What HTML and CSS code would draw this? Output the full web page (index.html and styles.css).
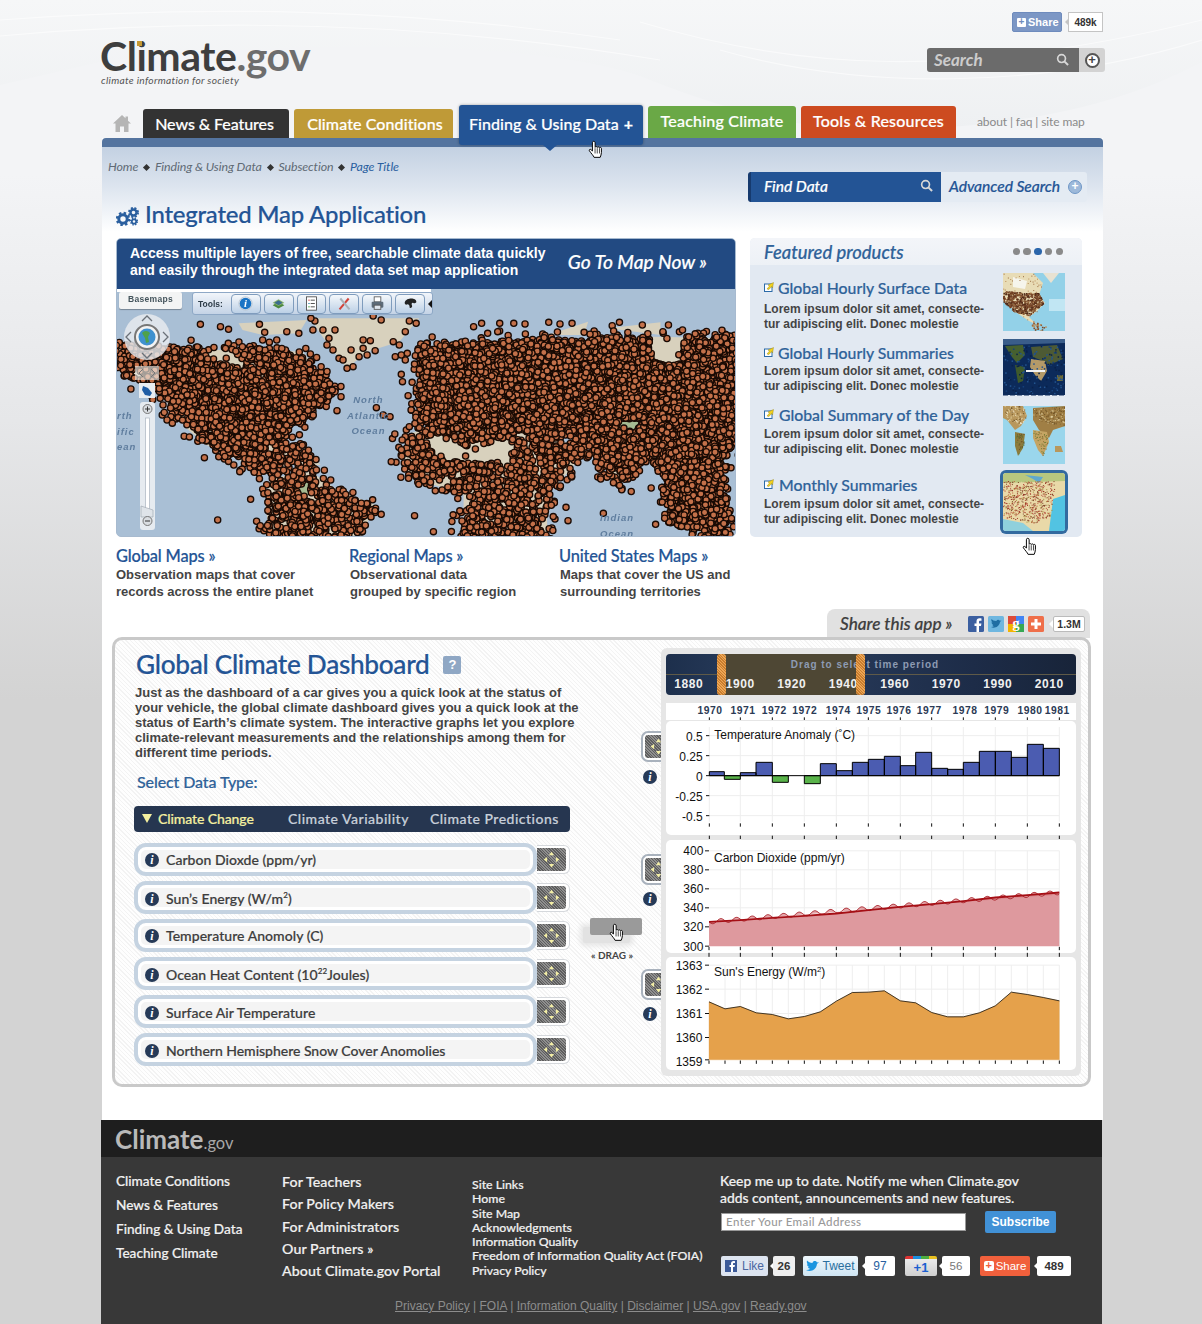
FILE: index.html
```html
<!DOCTYPE html>
<html lang="en">
<head>
<meta charset="utf-8">
<title>Integrated Map Application - Climate.gov</title>
<link rel="stylesheet" href="styles.css">
</head>
<body>
<svg class="defs" width="0" height="0" aria-hidden="true">
  <symbol id="arrows" viewBox="0 0 24 24">
    <path fill="#f3eea6" d="M12 3l3 4H9zM12 21l-3-4h6zM3 12l4-3v6zM21 12l-4 3V9z"/>
  </symbol>
  <symbol id="hand" viewBox="0 0 17 21">
    <path fill="#fff" stroke="#000" stroke-width="1.1" d="M6.5 1.2c1 0 1.6.7 1.6 1.6V8c.4-.9 2.1-.9 2.5.1.4-.8 2.1-.7 2.4.3.6-.6 2.2-.3 2.2.9v4.6c0 2.3-.8 3.6-1.4 5.5H6.9C6.2 17.500 3.400 14.700 1.600 12c-.7-1.100.6-2.300 1.700-1.400L5 12.200V2.800c0-.9.500-1.600 1.500-1.600z"/>
    <path stroke="#000" stroke-width=".8" d="M8 9v6M10.500 9v6M13 9v6"/>
  </symbol>
  <symbol id="mag" viewBox="0 0 14 14">
    <circle cx="6" cy="6" r="4.200" fill="none" stroke="currentColor" stroke-width="1.800"/>
    <path stroke="currentColor" stroke-width="2.200" d="M9 9l4 4"/>
  </symbol>
  <symbol id="ext" viewBox="0 0 10 10">
    <rect x=".5" y="2" width="7.500" height="7.500" fill="#fff" stroke="#2b6aa8"/>
    <path fill="#f2d21f" stroke="#8a7a10" stroke-width=".4" d="M3 7l2.500-3L4 3l5.500-2.500L8.500 6l-1-1.500L5 7.500z"/>
  </symbol>
</svg>

<svg class="waves" viewBox="0 0 1202 175" width="1202" height="175" aria-hidden="true">
  <defs>
    <linearGradient id="wv" x1="0" y1="0" x2="0" y2="1"><stop offset="0" stop-color="#f6f7f8"/><stop offset="1" stop-color="#eef0f2"/></linearGradient>
  </defs>
  <path fill="url(#wv)" d="M0 0H1202V62C1130 100 1040 125 900 130C800 133 720 108 640 76C540 42 300 38 100 62L0 85Z"/>
  <path fill="#f3f4f6" d="M0 100C40 88 70 80 102 76V175H0Z"/>
  <path fill="#f3f4f6" d="M1103 140C1140 130 1175 120 1202 108V175H1103Z"/>
  <path fill="none" stroke="#fff" stroke-width="1.200" opacity=".55" d="M0 20C200 5 400 8 620 40M0 36C200 18 420 20 660 60M640 22C800 70 960 80 1202 20M720 50C860 90 1040 90 1202 40"/>
</svg>

<div class="page">
  <header class="head">
    <div class="share-top">
      <a class="share-btn"><span class="plus-box">+</span>Share</a>
      <span class="share-count">489k</span>
    </div>
    <div class="brand">
      <div class="logo">
        <div class="logo-word">Climate<span class="logo-gov">.gov</span><span class="logo-dot"></span></div>
        <div class="logo-tag">climate information for society</div>
      </div>
      <div class="search">
        <div class="search-field"><span>Search</span><svg class="mag-i"><use href="#mag"/></svg></div>
        <div class="search-plus"><span>+</span></div>
      </div>
    </div>
    <nav class="nav">
      <svg class="home" viewBox="0 0 18 17"><path fill="#b5b5b5" d="M9 0L0 8.500h2.500V17h4.500v-5.500h4V17h4.500V8.500H18L15 5.700V1.500h-2.500v1.800z"/></svg>
      <a class="tab tab-news">News &amp; Features</a>
      <a class="tab tab-cond">Climate Conditions</a>
      <a class="tab tab-find">Finding &amp; Using Data <b>+</b></a>
      <a class="tab tab-teach">Teaching Climate</a>
      <a class="tab tab-tools">Tools &amp; Resources</a>
      <span class="nav-links">about | faq | site map</span>
    </nav>
  </header>

  <main class="main">
    <div class="bluebar"></div>
    <div class="main-top">
      <div class="toprow">
        <div class="toprow-left">
          <div class="crumbs">Home <i class="dm"></i> Finding &amp; Using Data <i class="dm"></i> Subsection <i class="dm"></i> <span class="crumb-cur">Page Title</span></div>
          <h1 class="page-title">
            <svg class="gears" viewBox="0 0 24 20"><g fill="none" stroke="#2a5f9f"><circle cx="7" cy="13" r="4.200" stroke-width="3"/><circle cx="7" cy="13" r="6" stroke-width="2.400" stroke-dasharray="2.400 2.300"/><circle cx="17.500" cy="6.500" r="3" stroke-width="2.400"/><circle cx="17.500" cy="6.500" r="4.500" stroke-width="2" stroke-dasharray="2 1.600"/><circle cx="18" cy="15.500" r="2.200" stroke-width="1.800"/><circle cx="18" cy="15.500" r="3.400" stroke-width="1.400" stroke-dasharray="1.400 1.300"/></g></svg>
            Integrated Map Application
          </h1>
        </div>
        <div class="findbar">
          <div class="find-field"><span>Find Data</span><svg class="mag-i"><use href="#mag"/></svg></div>
          <div class="adv"><span>Advanced Search</span><span class="adv-plus">+</span></div>
        </div>
      </div>

      <div class="mapgrid">
        <section class="mappanel">
          <div class="map-head">
            <p class="map-intro">Access multiple layers of free, searchable climate data quickly and easily through the integrated data set map application</p>
            <a class="map-go">Go To Map Now »</a>
          </div>
          <div class="map">
            <canvas id="mapcanvas" class="mapcanvas" width="618" height="247"></canvas>
            <div class="map-strip"></div>
            <div class="basemaps">Basemaps</div>
            <div class="toolbar">
              <span class="tools-label">Tools:</span>
              <span class="tool"><svg viewBox="0 0 18 18"><circle cx="9" cy="9" r="7" fill="#1b74c5"/><circle cx="9" cy="9" r="8" fill="none" stroke="#b9c4cf"/><text x="9" y="13" class="tool-i">i</text></svg></span>
              <span class="tool"><svg viewBox="0 0 18 18"><path fill="#4d8a3f" d="M2 11l7-4 7 4-7 4z"/><path fill="#8db56a" d="M2 8l7-4 7 4-7 4z"/><path fill="#3d6d8f" d="M4 8l5-3 5 3-5 3z"/></svg></span>
              <span class="tool"><svg viewBox="0 0 18 18"><rect x="3" y="1" width="12" height="16" fill="#fff" stroke="#444"/><path stroke="#c33" d="M5 5h2"/><path stroke="#38a" d="M5 9h2"/><path stroke="#393" d="M5 13h2"/><path stroke="#333" d="M8 5h5M8 9h5M8 13h5"/></svg></span>
              <span class="tool"><svg viewBox="0 0 18 18"><path stroke="#d2433a" stroke-width="2.400" d="M3 16L14 3"/><path stroke="#aab1b8" stroke-width="2.400" d="M4 3l11 13"/></svg></span>
              <span class="tool"><svg viewBox="0 0 18 18"><rect x="5" y="1" width="8" height="6" fill="#fff" stroke="#555"/><rect x="2" y="7" width="14" height="7" rx="1" fill="#5d6b78"/><rect x="5" y="11" width="8" height="5" fill="#dfe6ee" stroke="#555"/></svg></span>
              <span class="tool"><svg viewBox="0 0 18 18"><path fill="#222" d="M2 8c1-4 5-5 8-5s6 1 6 4c0 2-3 2-4 1-2 0-2 2-1 4 0 2-2 3-3 2 0-3-1-4-3-4-1 1-3 0-3-2z"/></svg></span>
              <span class="tool-end"></span>
            </div>
            <svg class="map-ctrl" viewBox="0 0 618 246" aria-hidden="true">
              <circle cx="30" cy="47" r="23" fill="#e9ecef" opacity=".82"/>
              <g fill="none" stroke="#6b7178" stroke-width="1.300"><path d="M25 31l5-5 5 5M25 63l5 5 5-5M14 42l-5 5 5 5M46 42l5 5-5 5"/></g>
              <circle cx="30" cy="47" r="12" fill="#f3f3f3" stroke="#777" stroke-width="2"/>
              <circle cx="30" cy="47" r="8.500" fill="#3f91cf"/><path fill="#4fa14b" d="M25 43c3-3 6-2 8 0l-2 4 1 5-3 1-1-5z"/>
              <rect x="18" y="76" width="24" height="14" fill="#f0ece6" opacity=".65"/>
              <path fill="none" stroke="#777" d="M26 79l-4 4 4 4M34 79l4 4-4 4"/>
              <rect x="22" y="93" width="16" height="15" fill="#e9edf1"/>
              <path fill="#1f5da5" d="M26 96l5 2 4 5-2 3-5-1-3-5z"/>
              <rect x="23" y="112" width="15" height="128" rx="3" fill="#e6ebf0"/>
              <circle cx="30.500" cy="119" r="4.500" fill="#d9dde1" stroke="#777"/><path stroke="#333" d="M28 119h5M30.500 116.500v5"/>
              <rect x="28.500" y="128" width="4" height="95" fill="#fff" stroke="#a9b4bf" stroke-width=".7"/>
              <path fill="#dfe4e9" stroke="#99a3ad" stroke-width=".6" d="M24 216l12 4v7H24z"/>
              <circle cx="30.500" cy="231" r="4.500" fill="#d9dde1" stroke="#777"/><path stroke="#333" d="M28 231h5"/>
            </svg>
            <div class="ocean o1">North<br>Atlantic<br>Ocean</div>
            <div class="ocean o2">rth<br>ific<br>ean</div>
            <div class="ocean o3">Indian<br>Ocean</div>
          </div>
        </section>

        <aside class="featured">
          <div class="feat-head">
            <h2 class="feat-title">Featured products</h2>
            <div class="feat-dots"><i></i><i></i><i class="on"></i><i></i><i></i></div>
          </div>
          <div class="feat-body">
            <article class="feat-item fi1">
              <div class="feat-text">
                <h3><svg class="ext"><use href="#ext"/></svg>Global Hourly Surface Data</h3>
                <p>Lorem ipsum dolor sit amet, consecte-<br>tur adipiscing elit. Donec molestie</p>
              </div>
              <canvas class="thumb" id="t1" width="62" height="58"></canvas>
            </article>
            <article class="feat-item fi2">
              <div class="feat-text">
                <h3><svg class="ext"><use href="#ext"/></svg>Global Hourly Summaries</h3>
                <p>Lorem ipsum dolor sit amet, consecte-<br>tur adipiscing elit. Donec molestie</p>
              </div>
              <canvas class="thumb" id="t2" width="62" height="58"></canvas>
            </article>
            <article class="feat-item fi3">
              <div class="feat-text">
                <h3><svg class="ext"><use href="#ext"/></svg>Global Summary of the Day</h3>
                <p>Lorem ipsum dolor sit amet, consecte-<br>tur adipiscing elit. Donec molestie</p>
              </div>
              <canvas class="thumb" id="t3" width="62" height="58"></canvas>
            </article>
            <article class="feat-item fi4">
              <div class="feat-text">
                <h3><svg class="ext"><use href="#ext"/></svg>Monthly Summaries</h3>
                <p>Lorem ipsum dolor sit amet, consecte-<br>tur adipiscing elit. Donec molestie</p>
              </div>
              <canvas class="thumb thumb-on" id="t4" width="62" height="58"></canvas>
            </article>
          </div>
        </aside>
      </div>

      <div class="maplinks">
        <div><h3>Global Maps »</h3><p>Observation maps that cover<br>records across the entire planet</p></div>
        <div><h3>Regional Maps »</h3><p>Observational data<br>grouped by specific region</p></div>
        <div><h3>United States Maps »</h3><p>Maps that cover the US and<br>surrounding territories</p></div>
      </div>
    </div>

    <div class="share-app">
      <span class="share-label">Share this app »</span>
      <svg class="soc" viewBox="0 0 16 16"><rect width="16" height="16" rx="1.500" fill="#3b5fa0"/><path fill="#fff" d="M11 16v-6h2l.4-2.500H11V6c0-.8.3-1.200 1.200-1.200h1.300V2.500C13 2.400 12.300 2.300 11.500 2.300 9.700 2.300 8.500 3.400 8.500 5.500v2H6.500V10h2v6z"/></svg>
      <svg class="soc" viewBox="0 0 16 16"><rect width="16" height="16" rx="1.500" fill="#6fb7e0"/><path fill="#1f6ea3" d="M3 11c3 1.500 8 .5 9-5l1.500-1.500-1.700.3C11 3.500 9 3.500 8.300 5 6 5 4.500 4 3.500 3c-.5 1.500 0 2.500 1 3.500L3.500 6.300c0 1.200.7 2 1.800 2.400l-1 0c.3.800 1 1.300 1.800 1.400C5 10.700 4 11 3 11z"/></svg>
      <svg class="soc" viewBox="0 0 16 16"><rect width="8" height="8" fill="#dd4b39"/><rect x="8" width="8" height="8" fill="#4285f4"/><rect y="8" width="8" height="8" fill="#f4b400"/><rect x="8" y="8" width="8" height="8" fill="#37a853"/><text x="8" y="12" class="soc-g">g</text></svg>
      <svg class="soc" viewBox="0 0 16 16"><rect width="16" height="16" rx="1.500" fill="#ef6f4a"/><path stroke="#fff" stroke-width="3" d="M8 3v10M3 8h10"/></svg>
      <span class="soc-count">1.3M</span>
    </div>

    <section class="dash">
      <div class="dash-left">
        <h2 class="dash-title">Global Climate Dashboard <span class="help">?</span></h2>
        <p class="dash-intro">Just as the dashboard of a car gives you a quick look at the status of your vehicle, the global climate dashboard gives you a quick look at the status of Earth’s climate system. The interactive graphs let you explore climate-relevant measurements and the relationships among them for different time periods.</p>
        <h3 class="select-type">Select Data Type:</h3>
        <div class="type-tabs">
          <span class="type-tab is-on"><i class="tri"></i>Climate Change</span>
          <span class="type-tab">Climate Variability</span>
          <span class="type-tab">Climate Predictions</span>
        </div>
        <ul class="rows">
          <li class="row"><div class="pill"><span class="info">i</span><span>Carbon Dioxde (ppm/yr)</span></div><div class="rowgrab"><span class="hatch"><svg><use href="#arrows"/></svg></span></div></li>
          <li class="row"><div class="pill"><span class="info">i</span><span>Sun’s Energy (W/m<sup>2</sup>)</span></div><div class="rowgrab"><span class="hatch"><svg><use href="#arrows"/></svg></span></div></li>
          <li class="row"><div class="pill"><span class="info">i</span><span>Temperature Anomoly (C)</span></div><div class="rowgrab"><span class="hatch"><svg><use href="#arrows"/></svg></span></div></li>
          <li class="row"><div class="pill"><span class="info">i</span><span>Ocean Heat Content (10<sup>22</sup>Joules)</span></div><div class="rowgrab"><span class="hatch"><svg><use href="#arrows"/></svg></span></div></li>
          <li class="row"><div class="pill"><span class="info">i</span><span>Surface Air Temperature</span></div><div class="rowgrab"><span class="hatch"><svg><use href="#arrows"/></svg></span></div></li>
          <li class="row"><div class="pill"><span class="info">i</span><span>Northern Hemisphere Snow Cover Anomolies</span></div><div class="rowgrab"><span class="hatch"><svg><use href="#arrows"/></svg></span></div></li>
        </ul>
      </div>

      <div class="dash-mid">
        <div class="grip g1"><span class="hatch"><svg><use href="#arrows"/></svg></span></div>
        <span class="info info-mid i1">i</span>
        <div class="grip g2"><span class="hatch"><svg><use href="#arrows"/></svg></span></div>
        <span class="info info-mid i2">i</span>
        <div class="grip g3"><span class="hatch"><svg><use href="#arrows"/></svg></span></div>
        <span class="info info-mid i2">i</span>
        <div class="drag-ghost"></div>
        <div class="drag-bar"></div>
        <div class="drag-label">« DRAG »</div>
        <svg class="cursor cursor-drag"><use href="#hand"/></svg>
      </div>

      <div class="dash-right">
        <div class="timeline">
          <div class="tl-sel"></div>
          <div class="tl-title">Drag to select time period</div>
          <div class="tl-years"><span>1880</span><span>1900</span><span>1920</span><span>1940</span><span>1960</span><span>1970</span><span>1990</span><span>2010</span></div>
          <div class="tl-handle h1"></div>
          <div class="tl-handle h2"></div>
        </div>
        <svg class="chart strip" viewBox="108 294 1230 51">
          <g class="yr">
            <text x="240" y="327">1970</text><text x="339" y="327">1971</text><text x="433" y="327">1972</text><text x="524" y="327">1972</text><text x="625" y="327">1974</text><text x="716" y="327">1975</text><text x="807" y="327">1976</text><text x="898" y="327">1977</text><text x="1005" y="327">1978</text><text x="1100" y="327">1979</text><text x="1200" y="327">1980</text><text x="1282" y="327">1981</text>
          </g>
          <path stroke="#111" stroke-width="3" d="M238 337v8M331 337v8M427 337v8M523 337v8M619 337v8M715 337v8M811 337v8M905 337v8M1000 337v8M1096 337v8M1192 337v8M1288 337v8"/>
        </svg>
        <svg class="chart c1" viewBox="108 348 1230 342">
          <path stroke="#eee" stroke-width="3" fill="none" d="M238 366V650M331 366V650M427 366V650M523 366V650M619 366V650M715 366V650M811 366V650M905 366V650M1000 366V650M1096 366V650M1192 366V650M1288 366V650M238 392H1288M238 452H1288M238 572H1288M238 632H1288"/>
          <path fill="#4b5cb1" stroke="#000" stroke-width="3" d="M238 512V500H283V512ZM331 512V503H378V512ZM378 512V472H427V512ZM571 512V476H619V512ZM619 512V497H667V512ZM667 512V472H715V512ZM715 512V463H763V512ZM763 512V454H811V512ZM811 512V482H857V512ZM857 512V442H905V512ZM905 512V490H953V512ZM953 512V493H1000V512ZM1000 512V472H1048V512ZM1048 512V439H1096V512ZM1096 512V439H1144V512ZM1144 512V457H1192V512ZM1192 512V418H1240V512ZM1240 512V430H1288V512Z"/>
          <path fill="#59b34a" stroke="#000" stroke-width="3" d="M283 512V523H331V512ZM427 512V532H475V512ZM523 512V536H571V512Z"/>
          <path stroke="#000" stroke-width="3" d="M238 512H1288"/>
          <path stroke="#111" stroke-width="3" d="M228 392H238M228 452H238M228 512H238M228 572H238M228 632H238M238 655v10M331 655v10M427 655v10M523 655v10M619 655v10M715 655v10M811 655v10M905 655v10M1000 655v10M1096 655v10M1192 655v10M1288 655v10M238 692v10M331 692v10M427 692v10M523 692v10M619 692v10M715 692v10M811 692v10M905 692v10M1000 692v10M1096 692v10M1192 692v10M1288 692v10"/>
          <g class="axis"><text x="218" y="408">0.5</text><text x="218" y="468">0.25</text><text x="218" y="528">0</text><text x="218" y="588">-0.25</text><text x="218" y="648">-0.5</text></g>
          <text class="ct" x="253" y="402">Temperature Anomaly (˚C)</text>
        </svg>
        <svg class="chart c2" viewBox="288 0 1230 338">
          <path stroke="#eee" stroke-width="3" fill="none" d="M417 32H1468M417 89H1468M417 146H1468M417 203H1468M417 260H1468M511 32V318M607 32V318M703 32V318M799 32V318M895 32V318M991 32V318M1085 32V318M1180 32V318M1276 32V318M1372 32V318M1468 32V318"/>
          <path fill="#de999e" d="M417 245L511 240L607 233L703 227L799 220L895 210L991 200L1085 192L1180 183L1276 172L1372 165L1468 157V318H417Z"/>
          <path id="co2wave" fill="#d98288" fill-opacity=".7" stroke="#a82028" stroke-width="2.500" d=""/>
          <path fill="none" stroke="#a50f15" stroke-width="5.500" d="M417 245L511 240L607 233L703 227L799 220L895 210L991 200L1085 192L1180 183L1276 172L1372 165L1468 157"/>
          <path stroke="#111" stroke-width="3" d="M405 32H417M405 89H417M405 146H417M405 203H417M405 260H417M405 318H417M417 320v10M511 320v10M607 320v10M703 320v10M799 320v10M895 320v10M991 320v10M1085 320v10M1180 320v10M1276 320v10M1372 320v10M1468 320v10M417 338v12M511 338v12M607 338v12M703 338v12M799 338v12M895 338v12M991 338v12M1085 338v12M1180 338v12M1276 338v12M1372 338v12M1468 338v12"/>
          <g class="axis"><text x="400" y="46">400</text><text x="400" y="103">380</text><text x="400" y="160">360</text><text x="400" y="217">340</text><text x="400" y="274">320</text><text x="400" y="333">300</text></g>
          <text class="ct" x="432" y="65">Carbon Dioxide (ppm/yr)</text>
        </svg>
        <svg class="chart c3" viewBox="288 354 1230 338">
          <path stroke="#eee" stroke-width="3" fill="none" d="M417 378H1468M417 450H1468M417 523H1468M417 595H1468M465 378V662M511 378V662M559 378V662M607 378V662M655 378V662M703 378V662M751 378V662M799 378V662M847 378V662M895 378V662M943 378V662M991 378V662M1037 378V662M1085 378V662M1133 378V662M1180 378V662M1228 378V662M1276 378V662M1324 378V662M1372 378V662M1420 378V662M1468 378V662"/>
          <path fill="#e5a14b" stroke="#e5a14b" d="M417 488L465 509L511 502L559 521L607 526L655 539L703 532L751 518L799 486L847 460L895 459L943 455L991 485L1037 491L1085 520L1133 533L1180 533L1228 521L1276 500L1324 459L1372 466L1420 475L1468 485V662H417Z"/>
          <path fill="none" stroke="#1f1a12" stroke-width="2.500" d="M417 488L465 509L511 502L559 521L607 526L655 539L703 532L751 518L799 486L847 460L895 459L943 455L991 485L1037 491L1085 520L1133 533L1180 533L1228 521L1276 500L1324 459L1372 466L1420 475L1468 485"/>
          <path stroke="#111" stroke-width="3" d="M405 378H417M405 450H417M405 523H417M405 595H417M405 662H417M417 664v10M465 664v10M511 664v10M559 664v10M607 664v10M655 664v10M703 664v10M751 664v10M799 664v10M847 664v10M895 664v10M943 664v10M991 664v10M1037 664v10M1085 664v10M1133 664v10M1180 664v10M1228 664v10M1276 664v10M1324 664v10M1372 664v10M1420 664v10M1468 664v10"/>
          <g class="axis"><text x="397" y="392">1363</text><text x="397" y="464">1362</text><text x="397" y="537">1361</text><text x="397" y="609">1360</text><text x="397" y="682">1359</text></g>
          <text class="ct" x="432" y="411">Sun's Energy (W/m<tspan class="ct-sup" dy="-12">2</tspan><tspan dy="12">)</tspan></text>
        </svg>
      </div>
    </section>
  </main>

  <footer class="foot">
    <div class="foot-band"><span class="foot-logo">Climate<small>.gov</small></span></div>
    <div class="foot-body">
      <div class="foot-grid">
        <ul class="fcol fc1"><li>Climate Conditions</li><li>News &amp; Features</li><li>Finding &amp; Using Data</li><li>Teaching Climate</li></ul>
        <ul class="fcol fc2"><li>For Teachers</li><li>For Policy Makers</li><li>For Administrators</li><li>Our Partners »</li><li>About Climate.gov Portal</li></ul>
        <ul class="fcol fc3"><li>Site Links</li><li>Home</li><li>Site Map</li><li>Acknowledgments</li><li>Information Quality</li><li>Freedom of Information Quality Act (FOIA)</li><li>Privacy Policy</li></ul>
        <div class="fsub">
          <p class="fsub-text">Keep me up to date. Notify me when Climate.gov<br>adds content, announcements and new features.</p>
          <div class="fsub-form"><div class="fsub-input">Enter Your Email Address</div><div class="fsub-btn">Subscribe</div></div>
          <div class="fsocial">
            <span class="sb sb-like"><svg class="sb-i" viewBox="0 0 12 12"><rect width="12" height="12" fill="#3b5998"/><path fill="#fff" d="M8 12V7h1.500L10 5H8V4c0-.6.2-1 1-1h1V1.200C9.700 1 9 1 8.500 1 7 1 6 2 6 3.500V5H4.500v2H6v5z"/></svg>Like</span><span class="sc sc-26">26</span>
            <span class="sb sb-tweet"><svg class="sb-i" viewBox="0 0 14 12"><path fill="#1b95e0" d="M0 10c4 2 10 1 11-6l2-2-2 .5c-1-2-4-2-4.500.5C4 3 2.500 2 1 .5c-.5 1.500 0 3 1 4l-1-.3C1 5.500 2 6.500 3 7H2c.3 1 1 1.500 2 1.700C3 9.700 1.500 10 0 10z"/></svg>Tweet</span><span class="sc sc-97">97</span>
            <span class="sb sb-plus">+1</span><span class="sc sc-56">56</span>
            <span class="sb sb-share"><i class="plus-sq">+</i>Share</span><span class="sc sc-489">489</span>
          </div>
        </div>
      </div>
      <div class="foot-legal"><a>Privacy Policy</a> | <a>FOIA</a> | <a>Information Quality</a> | <a>Disclaimer</a> | <a>USA.gov</a> | <a>Ready.gov</a></div>
    </div>
  </footer>

  <svg class="cursor cursor-nav"><use href="#hand"/></svg>
  <svg class="cursor cursor-thumb"><use href="#hand"/></svg>
</div>
<script src="script.js"></script>
</body>
</html>
```

FILE: styles.css
```css
* { box-sizing: border-box; }
html, body { margin: 0; padding: 0; }
body {
  width: 1202px;
  height: 1324px;
  overflow: hidden;
  position: relative;
  background: linear-gradient(#f3f4f6 0, #f3f4f6 175px, #e6e7e9 420px, #d3d3d3 700px, #d3d3d3 100%);
  font-family: "Liberation Sans", Arial, sans-serif;
  color: #444;
}
h1, h2, h3, p, ul { margin: 0; padding: 0; font-weight: normal; }
ul { list-style: none; }
.defs { position: absolute; }
.waves { position: absolute; left: 0; top: 0; }
.page { position: relative; width: 1202px; height: 1324px; }

/* medium-weight look for the display face */
.tab, .page-title, .find-field, .adv, .map-go, .feat-title, .feat-item h3, .maplinks h3, .share-label,
.dash-title, .select-type, .type-tabs, .pill, .fcol, .fsub-text { -webkit-text-stroke: .2px currentColor; }

/* header */
.head { height: 138px; margin-left: 100px; width: 1005px; position: relative; }
.share-top { display: flex; justify-content: flex-end; padding: 12px 2px 0 0; height: 36px; font-size: 11px; font-weight: bold; }
.share-btn { display: flex; align-items: center; width: 50px; height: 20px; background: #7c97c5; color: #fff; border-radius: 2px; padding-left: 4px; gap: 2px; border: 1px solid #6e8bbd; }
.plus-box { width: 9px; height: 9px; background: #fff; color: #6e8bbd; border-radius: 1px; font-size: 10px; line-height: 8px; text-align: center; }
.share-count { display: flex; align-items: center; justify-content: center; width: 35px; height: 20px; margin-left: 6px; background: #fff; border: 1px solid #c4c4c4; color: #333; font-size: 10px; position: relative; }
.share-count::before { content: ""; position: absolute; left: -4px; top: 6px; border: 3px solid transparent; border-left: 0; border-right: 3px solid #c4c4c4; }
.brand { display: flex; justify-content: space-between; height: 57px; }
.logo { position: relative; }
.logo-word { font-family: Lato, sans-serif; font-size: 41px; line-height: 44px; font-weight: 700; color: #3e3e3e; letter-spacing: -.45px; position: relative; margin-top: -2px; white-space: nowrap; }
.logo-gov { color: #6d6d6d; font-weight: 700; }
.logo-dot { position: absolute; left: 37px; top: 7px; width: 5px; height: 5px; background: #c69a33; }
.logo-tag { font-family: Lato, sans-serif; font-style: italic; font-size: 10.200px; line-height: 10px; color: #555; margin: -3px 0 0 1px; letter-spacing: .3px; white-space: nowrap; }
.search { display: flex; height: 24px; margin-top: 12px; }
.search-field { width: 152px; height: 24px; background: #6b6b6b; border-radius: 3px 0 0 3px; display: flex; align-items: center; justify-content: space-between; padding: 0 10px 2px 7px; color: #ccc; font: italic bold 17px Lato, sans-serif; }
.mag-i { width: 13px; height: 13px; color: #d7d7d7; }
.search-plus { width: 26px; background: #d3d3d3; border-radius: 0 3px 3px 0; display: flex; align-items: center; justify-content: center; }
.search-plus span { width: 15px; height: 15px; border-radius: 50%; background: #fff; border: 2px solid #555; color: #444; font: bold 13px/10px "Liberation Sans", sans-serif; text-align: center; }
.nav { position: absolute; left: 0; top: 0; width: 1005px; height: 138px; display: flex; align-items: flex-end; pointer-events: none; }
.home { width: 18px; height: 17px; margin: 0 12px 6px 13px; }
.tab { display: flex; align-items: center; justify-content: center; color: #fff; font: 500 16px Lato, sans-serif; border-radius: 3px 3px 0 0; height: 29px; }
.tab-news { width: 146px; background: #333; letter-spacing: -.08px; padding-right: 3px; }
.tab-cond { width: 159px; background: #bf9a37; margin-left: 5px; letter-spacing: .1px; padding-left: 3px; }
.tab-find { width: 184px; height: 40px; background: #235495; margin: 0 5px 0 6px; border-radius: 3px; position: relative; z-index: 3; top: 7px; box-shadow: 0 0 3px rgba(0,0,0,.35); padding-bottom: 4px; letter-spacing: .05px; }
.tab-find b { font-weight: 700; margin-left: 5px; }
.tab-find::after { content: ""; position: absolute; left: 84px; bottom: -6px; border: 7px solid transparent; border-bottom: 0; border-top: 6px solid #235495; }
.tab-teach { width: 148px; height: 32px; background: #6aa846; padding-bottom: 3px; letter-spacing: .2px; }
.tab-tools { width: 155px; height: 32px; background: #cd4b20; margin-left: 5px; padding-bottom: 3px; letter-spacing: .2px; }
.nav-links { margin-left: 21px; margin-bottom: 9px; font: 12px Lato, sans-serif; color: #8a8a8a; letter-spacing: -.1px; }

/* main column */
.main { position: relative; width: 1001px; margin-left: 102px; height: 982px; background: #fff; }
.bluebar { height: 9px; background: #54749f; border-radius: 4px 4px 0 0; }
.main-top { background: linear-gradient(#c3d1e2 0, #dde5ef 40px, #fff 85px, #fff 100px); background-repeat: no-repeat; }
.toprow { height: 91px; display: flex; justify-content: space-between; }
.toprow-left { padding-left: 6px; }
.crumbs { margin-top: 12px; height: 16px; font: italic 12.400px/16px Lato, sans-serif; color: #606a75; letter-spacing: -.1px; white-space: nowrap; }
.dm { display: inline-block; width: 5px; height: 5px; background: #333; transform: rotate(45deg); margin: 0 3px; vertical-align: 1px; }
.crumb-cur { color: #2a5f9f; }
.page-title { margin: 24px 0 0 2px; height: 30px; display: flex; align-items: center; gap: 5px; font: 500 23.900px/30px Lato, sans-serif; color: #235495; letter-spacing: -.2px; white-space: nowrap; }
.gears { width: 24px; height: 20px; margin: 4px 0 0 6px; }
.findbar { display: flex; margin: 25px 16px 0 0; height: 30px; }
.find-field { width: 193px; background: #235495; border-left: 3px solid #163a6e; border-radius: 3px 0 0 3px; color: #fff; display: flex; align-items: center; justify-content: space-between; padding: 0 8px 3px 13px; font: italic 500 15.500px Lato, sans-serif; }
.adv { width: 146px; background: #e4ebf3; border-radius: 0 3px 3px 0; display: flex; align-items: center; justify-content: space-between; padding: 0 5px 3px 8px; color: #235495; font: italic 500 15.600px Lato, sans-serif; letter-spacing: -.05px; }
.adv-plus { width: 14px; height: 14px; border-radius: 50%; background: #9db9da; border: 1.500px solid #6f97c6; color: #fff; font: bold 12px/10px "Liberation Sans", sans-serif; text-align: center; -webkit-text-stroke: 0; margin-top: 3px; }

.mapgrid { display: grid; grid-template-columns: 620px 332px; column-gap: 14px; padding-left: 14px; height: 299px; }
.mappanel { border: 1px solid #a7bacf; border-radius: 5px; overflow: hidden; background: #a9bfd5; display: flex; flex-direction: column; }
.map-head { height: 50px; background: #224a82; display: flex; align-items: center; justify-content: space-between; padding: 0 28px 5px 13px; color: #fff; }
.map-intro { width: 425px; font: bold 14px/17px "Liberation Sans", sans-serif; }
.map-go { font: italic 500 19.200px Lato, sans-serif; white-space: nowrap; }
.map { position: relative; flex: 1; }
.mapcanvas { display: block; }
.map-strip { position: absolute; left: 0; top: 0; width: 314px; height: 3px; background: #fff; }
.basemaps { position: absolute; left: 2px; top: 3px; width: 63px; height: 17px; background: #f3f4f4; border-radius: 2px; font: bold 8.500px/15px "Liberation Sans", sans-serif; color: #44545c; text-align: center; letter-spacing: .3px; box-shadow: 0 1px 1px rgba(0,0,0,.3); }
.toolbar { position: absolute; left: 75px; top: 3px; width: 241px; height: 23px; background: linear-gradient(#f1f5fa, #c4d3e6); border: 1px solid #8ea8c6; border-radius: 3px; display: flex; align-items: center; padding-left: 5px; }
.tools-label { font: bold 8.500px "Liberation Sans", sans-serif; color: #2e3d49; width: 33px; }
.tool { width: 30px; height: 20px; margin-right: 3px; background: linear-gradient(#f5f8fb, #bcd0e6); border: 1px solid #7f9cbd; border-radius: 4px; display: flex; align-items: center; justify-content: center; }
.tool svg { width: 15px; height: 15px; }
.tool-i { font: italic bold 13px "Liberation Serif", serif; fill: #fff; text-anchor: middle; }
.tool-end { width: 0; height: 0; border: 4px solid transparent; border-right: 4px solid #111; border-left: 0; }
.map-ctrl { position: absolute; left: 0; top: 1px; width: 618px; height: 246px; }
.ocean { position: absolute; font: italic bold 9.500px/15.500px "Liberation Sans", sans-serif; color: #5f7d9e; letter-spacing: 1px; text-align: center; }
.o1 { left: 230px; top: 103px; }
.o2 { left: 0; top: 119px; text-align: left; }
.o3 { left: 483px; top: 221px; height: 26px; overflow: hidden; }

.featured { border-radius: 5px; overflow: hidden; background: #e2e9f2; }
.feat-head { height: 27px; background: linear-gradient(#f3f5f9, #edf1f6); display: flex; justify-content: space-between; align-items: center; padding: 0 19px 0 14px; }
.feat-title { font: italic 500 18.400px Lato, sans-serif; color: #2f6299; }
.feat-dots { display: flex; gap: 3.200px; }
.feat-dots i { width: 7.500px; height: 7.500px; border-radius: 50%; background: #8a8a8a; }
.feat-dots .on { background: #2b66ab; }
.feat-body { padding: 8px 17px 0 14px; }
.feat-item { display: flex; justify-content: space-between; height: 58px; margin-bottom: 8px; }
.fi2 { margin-bottom: 9px; }
.fi3 { margin-bottom: 9px; }
.feat-item h3 { font: 500 15.800px/20px Lato, sans-serif; color: #2f6299; display: flex; align-items: center; white-space: nowrap; }
.ext { width: 10px; height: 10px; margin: -3px 4px 0 0; flex: none; }
.fi3 .ext, .fi4 .ext { margin-right: 5px; }
.feat-item p { font: bold 12px/15px "Liberation Sans", sans-serif; color: #444; white-space: nowrap; }
.fi1 .feat-text { padding-top: 5px; }
.fi1 p { margin-top: 4px; }
.fi2 .feat-text { padding-top: 4px; }
.fi2 p { margin-top: 1px; }
.fi3 .feat-text { margin-top: -1px; }
.fi3 p { margin-top: 2px; }
.fi4 .feat-text { padding-top: 2px; }
.fi4 p { margin-top: 2px; }
.thumb { display: block; width: 62px; height: 58px; filter: blur(.35px); }
.thumb-on { box-shadow: 0 0 0 3px #336a9f; border-radius: 3px; filter: none; }

.maplinks { display: grid; grid-template-columns: 233px 210px auto; padding: 9px 0 0 14px; }
.maplinks h3 { font: 500 16.400px/20px Lato, sans-serif; color: #235495; letter-spacing: -.15px; }
.maplinks p { font: bold 13px/17px "Liberation Sans", sans-serif; color: #444; }
.maplinks div + div p { margin-left: 1px; }

.share-app { margin: 9px 0 0 725px; width: 263px; height: 29px; background: #e1e1e1; border-radius: 8px 8px 0 0; display: flex; align-items: center; padding: 0 4px 0 13px; position: relative; }
.share-label { font: italic 500 17.200px Lato, sans-serif; color: #3e3e3e; width: 128px; white-space: nowrap; }
.soc { width: 16px; height: 16px; margin-right: 4px; }
.soc-g { font: bold 14px "Liberation Serif", serif; fill: #fff; text-anchor: middle; }
.soc-count { margin-left: 5px; width: 32px; height: 16px; background: #fff; border: 1px solid #bbb; border-radius: 2px; font: bold 10.500px/14px "Liberation Sans", sans-serif; text-align: center; color: #333; position: relative; }
.soc-count::before { content: ""; position: absolute; left: -5px; top: 3px; border: 4px solid transparent; border-left: 0; border-right: 4px solid #fff; }

.dash { position: relative; margin: -1px 0 0 10px; width: 979px; height: 450px; border: 3px solid #c9c9c9; border-radius: 10px; padding: 8px 0 0 19px; display: grid; grid-template-columns: 436px 91px 420px; background: #fdfdfd repeating-linear-gradient(45deg, #f3f3f3 0 1px, #fefefe 1px 3px); }
.dash-title { margin-left: 2px; height: 33px; font: 500 26.200px/33px Lato, sans-serif; color: #235495; display: flex; align-items: center; letter-spacing: -.3px; white-space: nowrap; }
.help { width: 18px; height: 18px; margin-left: 14px; background: #8fa7c4; border-radius: 2px; color: #fff; font: bold 13px/18px "Liberation Sans", sans-serif; text-align: center; -webkit-text-stroke: 0; }
.dash-intro { margin: 4px 0 0 1px; width: 445px; font: bold 13px/15px "Liberation Sans", sans-serif; color: #444; }
.select-type { margin: 10px 0 0 3px; font: 500 16px/24px Lato, sans-serif; color: #2f6299; letter-spacing: -.1px; }
.type-tabs { margin-top: 12px; height: 26px; width: 436px; background: #263650; border-radius: 4px; display: flex; align-items: center; font: 500 14px Lato, sans-serif; color: #c8d0da; padding: 0 0 2px 8px; letter-spacing: .5px; }
.type-tab { white-space: nowrap; }
.type-tab:nth-child(2) { margin-left: 35px; }
.type-tab:nth-child(3) { margin-left: 21px; }
.is-on { color: #f5f0a0; width: 111px; display: flex; align-items: center; letter-spacing: -.1px; }
.tri { width: 0; height: 0; border: 5px solid transparent; border-bottom: 0; border-top: 9px solid #f5f0a0; margin-right: 6px; }
.rows { margin-top: 11px; display: flex; flex-direction: column; gap: 5px; }
.row { display: flex; align-items: center; height: 33px; }
.pill { width: 403px; height: 33px; border: 4px solid #c5d3e1; border-radius: 12px; background: #f4f4f4; box-shadow: inset 0 0 0 3px #fff; display: flex; align-items: center; padding-left: 7px; gap: 7px; font: 500 14px Lato, sans-serif; color: #3d3d3d; position: relative; z-index: 1; white-space: nowrap; letter-spacing: .05px; }
.row:nth-child(2) .pill, .row:nth-child(4) .pill, .row:nth-child(5) .pill, .row:nth-child(6) .pill { padding-top: 2px; }
.row:nth-child(6) .pill { letter-spacing: -.02px; }
.pill sup { font-size: 8px; line-height: 0; }
.info { flex: none; width: 14px; height: 14px; border-radius: 50%; background: #263a58; color: #fff; font: italic bold 12px/14px "Liberation Serif", serif; text-align: center; display: block; -webkit-text-stroke: 0; }
.rowgrab { width: 33px; height: 29px; background: #fff; border: 1px solid #d5d8dc; border-left: 0; border-radius: 0 6px 6px 0; padding: 2px 3px 2px 0; display: flex; }
.hatch { flex: 1; border-radius: 0 3px 3px 0; background: repeating-linear-gradient(45deg, #5e5e5e 0 1px, #8f8f8f 1px 2px); display: flex; align-items: center; justify-content: center; }
.hatch svg { width: 21px; height: 21px; }

.dash-mid { position: relative; }
.grip { width: 30px; height: 31px; margin-left: 71px; border: 2px solid #a9b2bd; border-right: 0; border-radius: 7px 0 0 7px; background: #fff; padding: 2px 0 2px 2px; display: flex; }
.grip .hatch { border-radius: 3px 0 0 3px; }
.g1 { margin-top: 83px; }
.g2 { margin-top: 70px; }
.g3 { margin-top: 63px; }
.info-mid { margin-left: 73px; }
.i1 { margin-top: 8px; }
.i2 { margin-top: 7px; }
.drag-ghost { position: absolute; left: 13px; top: 279px; width: 47px; height: 16px; background: #e2e2e2; border-radius: 2px; box-shadow: 0 0 5px 3px #e6e6e6; }
.drag-bar { position: absolute; left: 20px; top: 270px; width: 52px; height: 17px; background: #9a9a9a; border-radius: 2px; }
.drag-label { position: absolute; left: 21px; top: 301px; font: bold 10px/12px Lato, sans-serif; color: #444; white-space: nowrap; }
.cursor { position: absolute; width: 15px; height: 19px; z-index: 9; }
.cursor-drag { left: 39px; top: 275px; }
.cursor-nav { left: 588px; top: 140px; }
.cursor-thumb { left: 1022px; top: 537px; }

.dash-right { position: relative; z-index: 2; width: 420px; height: 428px; background: #e6e6e6; border-radius: 6px; padding: 6px 5px 0; }
.chart { display: block; width: 410px; }
.timeline { position: relative; height: 41px; border-radius: 4px; background: linear-gradient(90deg, #1d2f4c 0, #2a3e5e 25%, #1d2c48 75%, #182439); overflow: hidden; }
.timeline::before { content: ""; position: absolute; left: 0; right: 0; top: 20px; height: 1px; background: #5f5a48; }
.tl-sel { position: absolute; left: 56px; top: 0; width: 135px; height: 41px; background: #4e4734; }
.tl-title { position: relative; padding: 5px 12px 0 0; height: 20px; text-align: center; font: bold 10px/12px "Liberation Sans", sans-serif; letter-spacing: .98px; color: #8d9bb3; }
.tl-years { position: relative; display: grid; grid-template-columns: repeat(8, 51.500px); margin-left: -3px; padding-top: 2px; font: bold 12px/16px "Liberation Sans", sans-serif; letter-spacing: .6px; color: #f0f0f0; text-align: center; }
.tl-handle { position: absolute; top: 0; width: 9px; height: 41px; border-radius: 3px; background: #e0903c repeating-linear-gradient(45deg, #c97d2e 0 1px, #eda655 1px 2px); }
.h1 { left: 51px; }
.h2 { left: 190px; }
.strip { height: 17px; margin-top: 8px; background: #fff; }
.yr text { font: bold 31px "Liberation Sans", sans-serif; fill: #2b3a55; text-anchor: middle; letter-spacing: 1.500px; }
.c1 { height: 114px; margin-top: 1px; background: #fff; border-radius: 5px; overflow: visible; }
.c2 { height: 113px; margin-top: 5px; background: #fff; border-radius: 5px; overflow: visible; }
.c3 { height: 113px; margin-top: 4px; background: #fff; border-radius: 5px; overflow: visible; }
.axis text { font: 36px "Liberation Sans", sans-serif; fill: #111; text-anchor: end; }
.ct { font: 36px "Liberation Sans", sans-serif; fill: #111; }
.ct-sup { font-size: 23px; }

/* footer */
.foot { margin-left: 101px; width: 1001px; height: 204px; background: #383838; color: #f1f1f1; position: relative; }
.foot-band { height: 37px; background: #1e1e1e; padding-left: 14px; }
.foot-logo { font: 700 26px/39px Lato, sans-serif; color: #b9b9b9; }
.foot-logo small { font-size: 16.500px; font-weight: 400; color: #a8a8a8; }
.foot-grid { display: grid; grid-template-columns: 166px 190px 248px auto; padding: 12px 0 0 15px; height: 134px; }
.fcol { font: 500 14.500px Lato, sans-serif; white-space: nowrap; }
.fc1 { font-size: 13.600px; }
.fc1 li { line-height: 24px; }
.fc2 { font-size: 14.200px; margin-top: 2px; }
.fc2 li { line-height: 22.300px; letter-spacing: .1px; }
.fc3 { margin-top: 9px; font-size: 12.300px; }
.fc3 li { line-height: 14.300px; }
.fsub-text { font: 500 13.850px/17px Lato, sans-serif; margin-top: 3px; white-space: nowrap; }
.fsub-form { display: flex; margin-top: 5px; align-items: center; }
.fsub-input { margin-left: 1px; width: 245px; height: 18px; background: #fff; border: 1px solid #999; color: #999; font: 500 11.500px/16px Lato, sans-serif; padding-left: 4px; letter-spacing: .4px; }
.fsub-btn { margin-left: 19px; width: 71px; height: 22px; background: #4191d6; border-radius: 2px; color: #fff; font: bold 12px/22px "Liberation Sans", sans-serif; text-align: center; }
.fsocial { display: flex; align-items: center; margin: 23px 0 0 1px; height: 20px; }
.sb { height: 20px; border-radius: 2px; display: flex; align-items: center; justify-content: center; font: 12px "Liberation Sans", sans-serif; }
.sc { height: 20px; background: #fff; border-radius: 2px; font: bold 11.500px/20px "Liberation Sans", sans-serif; text-align: center; color: #333; position: relative; }
.sc::before { content: ""; position: absolute; left: -3px; top: 7px; border: 3px solid transparent; border-left: 0; border-right: 3px solid #fff; }
.sb-i { width: 12px; height: 12px; margin-right: 5px; }
.sb-like { width: 47px; background: #dde4f0; color: #4b66a0; }
.sb-tweet { width: 55px; margin-left: 8px; background: linear-gradient(#f0f8fd, #cfe5f3); color: #2a6f9e; }
.sb-tweet .sb-i { width: 14px; margin-right: 2px; }
.sb-plus { width: 32px; margin-left: 10px; background: linear-gradient(90deg, #d33 0 25%, #1b8fe0 25% 50%, #4caf3f 50% 75%, #e8c020 75%) top/100% 3px no-repeat, linear-gradient(#f0f0f0, #cfcfcf); color: #1b5fd0; font-weight: bold; font-size: 13px; padding-top: 2px; }
.sb-share { width: 50px; margin-left: 10px; background: #f1603c; color: #fff; font-size: 11.500px; }
.plus-sq { font-style: normal; width: 10px; height: 10px; background: #fff; color: #f1603c; border-radius: 2px; margin-right: 2px; font: bold 11px/9px "Liberation Sans", sans-serif; text-align: center; }
.sc-26 { width: 22px; margin-left: 5px; background: #efefef; }
.sc-97 { width: 30px; margin-left: 7px; color: #2a5f9f; font-weight: normal; font-size: 12px; }
.sc-56 { width: 28px; margin-left: 5px; color: #777; font-weight: normal; }
.sc-489 { width: 34px; margin-left: 7px; }
.foot-legal { padding-left: 294px; font: 12px/16px "Liberation Sans", sans-serif; color: #8c8c8c; margin-top: 7px; }
.foot-legal a { text-decoration: underline; }
```

FILE: script.js
```javascript
(function () {
  var seed = 12345;
  function rnd() { seed = (seed * 16807) % 2147483647; return (seed - 1) / 2147483646; }
  function gauss() { return rnd() + rnd() + rnd() - 1.5; }
  function inside(p, x, y) {
    var c = false;
    for (var i = 0, j = p.length - 1; i < p.length; j = i++) {
      if ((p[i][1] > y) !== (p[j][1] > y) && x < (p[j][0] - p[i][0]) * (y - p[i][1]) / (p[j][1] - p[i][1]) + p[i][0]) c = !c;
    }
    return c;
  }
  var SX = 1 / 2.489, SY = 1 / 3;
  function px(x) { return x * SX - 7; }
  function py(y) { return y * SY - 54; }
  function poly(ctx, p, col, sx, sy) {
    ctx.beginPath();
    p.forEach(function (q, i) {
      var x = sx ? sx(q[0]) : q[0], y = sy ? sy(q[1]) : q[1];
      if (i) ctx.lineTo(x, y); else ctx.moveTo(x, y);
    });
    ctx.closePath(); ctx.fillStyle = col; ctx.fill();
  }

  /* world map */
  var NA = [[20,330],[150,340],[250,345],[380,345],[480,350],[510,400],[560,470],[510,520],[430,570],[415,625],[480,650],[525,690],[440,690],[380,720],[330,680],[240,630],[190,580],[140,500],[60,420],[20,400]];
  var SA = [[400,730],[500,710],[560,760],[660,810],[620,920],[400,920],[385,800]];
  var EA = [[780,400],[900,330],[1000,320],[1200,320],[1350,305],[1570,310],[1570,620],[1500,660],[1540,920],[1400,860],[1380,720],[1330,630],[1265,760],[1205,650],[1170,600],[1000,575],[900,570],[790,575]];
  var AF = [[735,600],[800,575],[1000,582],[1100,610],[1180,640],[1150,700],[1085,780],[1090,920],[880,920],[880,780],[735,720]];
  var GR = [[500,250],[770,250],[720,320],[640,350],[590,400],[550,340],[520,290]];
  var CA = [[320,265],[490,255],[470,295],[380,300],[330,285]];
  var HU = [[240,345],[330,350],[340,395],[290,395]];
  var SAH = [[780,605],[830,595],[900,640],[1000,610],[1002,695],[880,680],[800,650]];
  var RU = [[1350,300],[1430,300],[1425,385],[1370,385],[1340,340]];
  var TI = [[1255,570],[1300,550],[1330,550],[1310,590],[1270,590]];
  var GBI = [[470,740],[500,740],[498,780],[470,780]];
  var exclude = [SAH, RU, TI, HU, GBI];
  var map = document.getElementById('mapcanvas');
  if (map) {
    var c = map.getContext('2d');
    c.fillStyle = '#a9bfd5'; c.fillRect(0, 0, 618, 247);
    [NA, SA, EA, AF, GR, CA, [[1090,300],[1190,260],[1180,300]], [[1240,280],[1370,262],[1370,300]]].forEach(function (p) { poly(c, p, '#d8d1bd', px, py); });
    poly(c, TI, '#a5bb92', px, py);
    poly(c, GBI, '#a5bb92', px, py);
    poly(c, [[1090,650],[1140,650],[1120,670]], '#a5bb92', px, py);
    var pts = [];
    [[NA, 1900], [SA, 450], [EA, 6500], [AF, 1000], [[[780,340],[1130,330],[1130,570],[780,560]], 3200], [[[300,470],[560,460],[420,600],[260,600]], 900], [[[1240,420],[1500,420],[1500,620],[1240,620]], 700], [[[1400,620],[1530,620],[1530,860],[1400,840]], 300]].forEach(function (r) {
      var p = r[0], n = r[1], x0 = 1e9, x1 = -1e9, y0 = 1e9, y1 = -1e9;
      p.forEach(function (q) { x0 = Math.min(x0, q[0]); x1 = Math.max(x1, q[0]); y0 = Math.min(y0, q[1]); y1 = Math.max(y1, q[1]); });
      for (var i = 0, t = 0; i < n && t < n * 30; t++) {
        var x = x0 + rnd() * (x1 - x0), y = y0 + rnd() * (y1 - y0);
        if (!inside(p, x, y)) continue;
        x += gauss() * 32; y += gauss() * 26;
        var ex = false;
        exclude.forEach(function (e) { if (inside(e, x, y) && rnd() > 0.03) ex = true; });
        if (ex) continue;
        pts.push([x, y]); i++;
      }
    });
    [[500,250],[510,258],[655,243],[675,255],[745,258],[762,265],[735,290],[705,320],[720,330],[788,325],[545,310],[560,285],[530,285],[505,285],[470,295],[440,290],[372,268],[225,268],[275,275],[295,283],[385,292],[415,315],[380,315],[630,315],[648,317],[540,330],[555,345],[570,370],[590,400],[605,395],[620,365],[640,360],[660,347],[630,340],[710,365],[725,360],[740,355],[760,362],[735,375],[485,577],[575,485],[565,527],[663,518],[680,540],[697,545],[745,575],[735,605],[700,680],[712,682],[235,668],[323,710],[350,793],[268,855],[758,842],[805,890],[1135,817],[1140,857],[1228,835],[1358,868],[1405,857],[725,418],[728,440],[752,442],[742,482],[52,462],[35,423],[130,540],[125,490],[132,510],[905,275],[925,265],[970,265],[1005,265],[1033,267],[1092,262],[1120,267],[1150,265],[940,295],[965,290],[1180,292],[1205,288],[1250,272],[1268,262],[1325,270],[1390,270],[1425,285],[848,358],[790,325],[600,345],[580,375]].forEach(function (q) { pts.push(q); });
    for (var k = pts.length - 1; k > 0; k--) { var m = Math.floor(rnd() * (k + 1)), tmp = pts[k]; pts[k] = pts[m]; pts[m] = tmp; }
    c.lineWidth = 1.3; c.strokeStyle = '#180a04'; c.fillStyle = '#c4714a';
    pts.forEach(function (q) {
      c.beginPath(); c.arc(px(q[0]), py(q[1]), 3.1, 0, 6.3); c.fill(); c.stroke();
    });
  }

  /* thumbnails */
  function thumb(id, sea, land, fn) {
    var el = document.getElementById(id); if (!el) return;
    var g = el.getContext('2d');
    g.fillStyle = sea; g.fillRect(0, 0, 62, 58);
    fn(g, land);
  }
  function specks(g, p, n, cols, s) {
    var x0 = 1e9, x1 = -1e9, y0 = 1e9, y1 = -1e9;
    p.forEach(function (q) { x0 = Math.min(x0, q[0]); x1 = Math.max(x1, q[0]); y0 = Math.min(y0, q[1]); y1 = Math.max(y1, q[1]); });
    for (var i = 0, t = 0; i < n && t < n * 30; t++) {
      var x = x0 + rnd() * (x1 - x0), y = y0 + rnd() * (y1 - y0);
      if (!inside(p, x, y)) continue;
      g.fillStyle = cols[Math.floor(rnd() * cols.length)];
      g.fillRect(x, y, s, s); i++;
    }
  }
  var NA1 = [[0,0],[30,0],[40,10],[36,22],[42,30],[34,38],[26,44],[34,52],[26,48],[14,40],[4,30],[0,28]];
  thumb('t1', '#93d1e8', '#e8dcb6', function (g, l) {
    poly(g, NA1, l);
    poly(g, [[40,0],[56,0],[48,10]], '#e8e2d2');
    poly(g, [[10,4],[24,8],[22,16],[10,14]], '#f6f5ec');
    specks(g, [[0,18],[36,20],[40,30],[26,42],[10,38],[0,28]], 520, ['#6c3b22', '#7c4a2c', '#4f2a18', '#8d6038'], 1.5);
    specks(g, NA1, 60, ['#b98c58', '#9c6b3e'], 1);
    specks(g, [[30,48],[44,54],[36,58],[26,54]], 30, ['#7c4a2c', '#b98c58'], 1.5);
    g.fillStyle = 'rgba(223,243,250,.6)'; g.fillRect(46, 26, 16, 12);
  });
  thumb('t2', '#0c2a5a', '#5a6a3c', function (g, l) {
    poly(g, [[0,0],[62,0],[62,4],[0,6]], '#3a5d8a');
    poly(g, [[2,7],[20,6],[22,16],[14,24],[9,18]], '#46602f');
    poly(g, [[12,26],[22,28],[20,42],[15,44]], '#3f5a2c');
    poly(g, [[28,8],[54,6],[60,20],[46,26],[40,22],[30,18]], '#4d5a34');
    poly(g, [[28,20],[42,22],[44,32],[38,42],[32,36],[27,28]], '#b49a68');
    poly(g, [[54,36],[60,36],[60,42],[54,42]], '#6c6a3a');
    specks(g, [[0,6],[62,6],[62,54],[0,54]], 160, ['#16407a', '#0a2148', '#235591'], 1.5);
    g.fillStyle = '#f2f2f2'; g.fillRect(23, 31, 19, 2);
    g.fillStyle = '#e2e9f2'; g.fillRect(0, 56, 62, 2);
    g.fillStyle = '#0c2a5a'; for (var i = 0; i < 62; i += 7) { g.fillRect(i, 55.500, 5, 1); }
  });
  thumb('t3', '#9ad6ec', '#b8975c', function (g, l) {
    poly(g, [[0,0],[20,0],[24,10],[18,20],[12,24],[4,14],[0,12]], l);
    poly(g, [[12,26],[22,28],[20,42],[15,50],[12,40]], '#8d7b3c');
    poly(g, [[30,2],[62,0],[62,20],[50,24],[46,32],[36,24],[30,14]], '#a07f45');
    poly(g, [[30,24],[44,26],[46,36],[40,50],[35,44],[30,32]], '#c4a463');
    poly(g, [[52,40],[58,40],[60,46],[52,46]], '#b8975c');
    specks(g, [[30,2],[62,0],[62,20],[30,14]], 180, ['#6d5126', '#8a6a34', '#e2d2a2'], 1);
    specks(g, [[0,0],[20,0],[24,10],[18,20],[4,14]], 90, ['#6d5126', '#e2d2a2', '#f4ecd4'], 1);
    specks(g, [[12,26],[22,28],[20,42],[15,50]], 40, ['#5c7a34', '#6d5126'], 1);
    specks(g, [[30,24],[44,26],[46,36],[40,50],[30,32]], 50, ['#6b7d34', '#8a6a34'], 1);
  });
  thumb('t4', '#e9d9a8', '#e9d9a8', function (g) {
    poly(g, [[0,0],[62,0],[62,8],[0,10]], '#b7c77f');
    poly(g, [[22,2],[40,4],[36,10],[30,6]], '#5fa9cf');
    poly(g, [[50,26],[62,22],[62,58],[46,58],[48,42]], '#52c3e2');
    poly(g, [[0,46],[20,50],[30,58],[0,58]], '#8fd0dc');
    specks(g, [[0,8],[52,8],[48,44],[30,50],[0,44]], 700, ['#8c2a22', '#a8392c', '#7a4426', '#9f8a3c', '#c0573a', '#e9d9a8'], 1);
  });

  /* CO2 seasonal wave */
  var w = document.getElementById('co2wave');
  if (w) {
    var up = '';
    for (var x = 417; x <= 1468; x += 6) {
      var t = (x - 417) / 1051, base = 245 - 88 * t, y = base + 7 * Math.sin((x - 417) / 47 * 2 * Math.PI);
      up += (up ? 'L' : 'M') + x + ' ' + y.toFixed(1);
    }
    w.setAttribute('d', up);
  }
})();
```
